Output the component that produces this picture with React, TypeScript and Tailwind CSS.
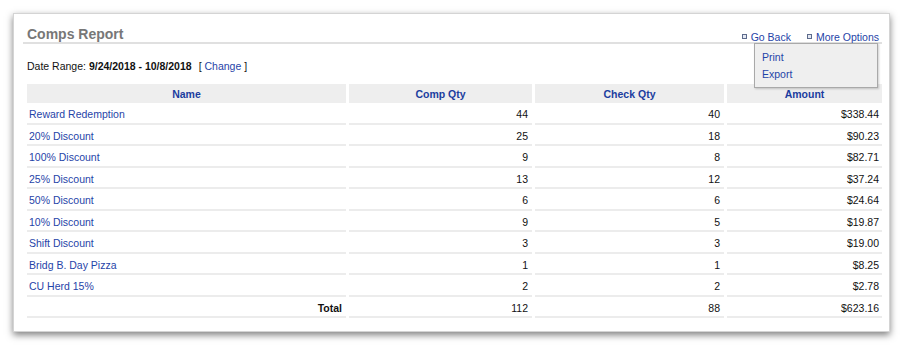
import React from 'react';

interface CompRow {
    name: string;
    compQty: number;
    checkQty: number;
    amount: string;
}

const rows: CompRow[] = [
    { name: 'Reward Redemption', compQty: 44, checkQty: 40, amount: '$338.44' },
    { name: '20% Discount', compQty: 25, checkQty: 18, amount: '$90.23' },
    { name: '100% Discount', compQty: 9, checkQty: 8, amount: '$82.71' },
    { name: '25% Discount', compQty: 13, checkQty: 12, amount: '$37.24' },
    { name: '50% Discount', compQty: 6, checkQty: 6, amount: '$24.64' },
    { name: '10% Discount', compQty: 9, checkQty: 5, amount: '$19.87' },
    { name: 'Shift Discount', compQty: 3, checkQty: 3, amount: '$19.00' },
    { name: 'Bridg B. Day Pizza', compQty: 1, checkQty: 1, amount: '$8.25' },
    { name: 'CU Herd 15%', compQty: 2, checkQty: 2, amount: '$2.78' },
];

const Bullet = () => (
    <span className="inline-block w-[5px] h-[5px] border border-[#5d6b8c] bg-[#e4e8f2] mr-[4px] mb-[1px]" />
);

export default function App() {
    const cell = 'h-[21.5px] border-b-2 border-[#ececec] p-0 pt-[3px] leading-[12px] align-middle';

    return (
        <div className="w-[912px] h-[350px] bg-white overflow-hidden pt-[13px] pl-[13px] font-['Liberation_Sans',Arial,sans-serif] text-[10.5px] text-[#111]">
            <div className="w-[877px] h-[319px] bg-white border border-[#d4d4d4] shadow-[0_3px_7px_rgba(0,0,0,0.5)] pt-[12px] pl-[9px] pr-[7px]">
                {/* Header */}
                <div className="relative flex items-end justify-between h-[18px] border-b-2 border-[#e0e0e0]">
                    <h1 className="pl-[4px] text-[14px] leading-[16px] font-bold text-[#777]">Comps Report</h1>
                    <div className="flex items-center pr-[3px] leading-[12px] mb-[-1px]">
                        <Bullet />
                        <span className="text-[#1f44a8]">Go Back</span>
                        <span className="ml-[16px]" />
                        <Bullet />
                        <span className="text-[#1f44a8]">More Options</span>
                    </div>

                    {/* Options menu */}
                    <div className="absolute right-[4px] top-[17px] w-[124px] h-[45px] bg-[#efefef] border border-[#a9a9a9] shadow-[1px_1px_2px_rgba(0,0,0,0.2)] pt-[5px] pl-[7px] text-[#1f44a8] z-10">
                        <div className="leading-[17px]">Print</div>
                        <div className="leading-[17px]">Export</div>
                    </div>
                </div>

                {/* Date range */}
                <div className="mt-[16px] pl-[4px] leading-[12px]">
                    Date Range: <span className="font-bold">9/24/2018 - 10/8/2018</span>
                    <span className="ml-[7px]">[ <span className="text-[#1f44a8]">Change</span> ]</span>
                </div>

                {/* Table */}
                <table className="mt-[12px] ml-[1px] w-[861px] border-separate border-spacing-x-[3px] border-spacing-y-0 table-fixed">
                    <colgroup>
                        <col className="w-[319px]" />
                        <col className="w-[183px]" />
                        <col className="w-[189px]" />
                        <col />
                    </colgroup>
                    <thead>
                        <tr>
                            {['Name', 'Comp Qty', 'Check Qty', 'Amount'].map(h => (
                                <th key={h} className="h-[19px] p-0 leading-[12px] bg-[#eeeeee] text-center font-bold text-[#1b3d9f]">
                                    {h}
                                </th>
                            ))}
                        </tr>
                    </thead>
                    <tbody>
                        {rows.map(r => (
                            <tr key={r.name}>
                                <td className={`${cell} pl-[2px] text-left text-[#1f44a8]`}>{r.name}</td>
                                <td className={`${cell} pr-[4px] text-right`}>{r.compQty}</td>
                                <td className={`${cell} pr-[4px] text-right`}>{r.checkQty}</td>
                                <td className={`${cell} pr-[3px] text-right`}>{r.amount}</td>
                            </tr>
                        ))}
                        <tr>
                            <td className={`${cell} pr-[4px] text-right font-bold`}>Total</td>
                            <td className={`${cell} pr-[4px] text-right`}>112</td>
                            <td className={`${cell} pr-[4px] text-right`}>88</td>
                            <td className={`${cell} pr-[3px] text-right`}>$623.16</td>
                        </tr>
                    </tbody>
                </table>
            </div>
        </div>
    );
}
